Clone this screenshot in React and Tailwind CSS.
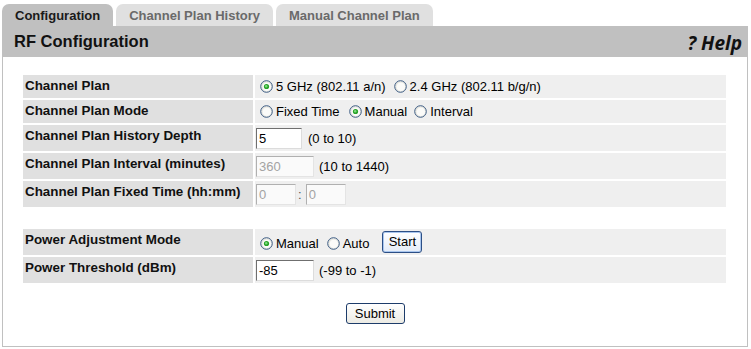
import React from 'react';

// XP style radio button
const Radio = ({ checked }) => (
  <svg width="13" height="13" viewBox="0 0 13 13" className="shrink-0">
    <circle cx="6.5" cy="6.5" r="5.8" fill="#e6e6e0" stroke="#3f5e86" strokeWidth="1" />
    <circle cx="6.8" cy="6.8" r="4.3" fill="#fbfbf9" />
    {checked && (
      <>
        <circle cx="6.5" cy="6.5" r="2.6" fill="#27a227" />
        <circle cx="6.2" cy="6.2" r="1.2" fill="#7bdc7b" />
      </>
    )}
  </svg>
);

const Option = ({ checked, label, className = '' }) => (
  <span className={`flex items-center gap-[3px] ${className}`}>
    <Radio checked={checked} />
    <span>{label}</span>
  </span>
);

const TextBox = ({ value, width, disabled }) => (
  <span
    className={`flex items-center h-[21px] pl-[2px] border ${
      disabled
        ? 'bg-[#fafafa] text-[#a3a3a3] border-t-[#b0b0b0] border-l-[#b0b0b0] border-r-[#e4e4e4] border-b-[#e4e4e4]'
        : 'bg-white text-black border-t-[#6f6f6f] border-l-[#6f6f6f] border-r-[#dcdcdc] border-b-[#dcdcdc]'
    }`}
    style={{ width }}
  >
    {value}
  </span>
);

const Label = ({ children }) => (
  <div className="bg-[#e0e0e0] pl-[2px] pt-[3px] font-bold text-[13.4px] leading-[15px] text-[#111]">{children}</div>
);

const Value = ({ children, className = '' }) => (
  <div className={`bg-[#efefef] pl-[1px] flex ${className}`}>{children}</div>
);

const tabs = [
  { name: 'Configuration', active: true },
  { name: 'Channel Plan History', active: false },
  { name: 'Manual Channel Plan', active: false }
];

export default function App() {
  return (
    <div className="w-[751px] h-[349px] bg-white pt-[4px] pl-[2px] text-[13px] leading-[15px] text-black font-['Liberation_Sans',Arial,sans-serif] overflow-hidden">
      {/* tabs */}
      <div className="flex gap-[3px] h-[22px]">
        {tabs.map(tab => (
          <div
            key={tab.name}
            className={`flex items-center pt-[1px] px-[13px] rounded-t-[7px] font-bold ${
              tab.active ? 'bg-[#c0c0c0] text-[#1a1a1a]' : 'bg-[#e0e0e0] text-[#6a6a6a]'
            }`}
          >
            {tab.name}
          </div>
        ))}
      </div>

      <div className="w-[746px]">
        {/* header bar */}
        <div className="h-[31px] bg-[#c0c0c0] flex items-center justify-between pl-[12px] pr-[6px]">
          <span className="font-bold text-[16.5px] text-[#111]">RF Configuration</span>
          <span className="font-['Noto_Sans',sans-serif] font-bold italic text-[19px] leading-[20px] text-[#111] pt-[2px]">? Help</span>
        </div>

        {/* body */}
        <div className="border-x border-b border-[#c0c0c0] pt-[18px] pl-[20px] pr-[20px] pb-[22px]">
          <div className="grid grid-cols-[230px_471px] gap-[2px]">
            <Label>Channel Plan</Label>
            <Value className="h-[23px] items-center">
              <Option checked label="5 GHz (802.11 a/n)" className="ml-[4px]" />
              <Option label="2.4 GHz (802.11 b/g/n)" className="ml-[8px]" />
            </Value>

            <Label>Channel Plan Mode</Label>
            <Value className="h-[23px] items-center">
              <Option label="Fixed Time" className="ml-[4px]" />
              <Option checked label="Manual" className="ml-[9px]" />
              <Option label="Interval" className="ml-[7px]" />
            </Value>

            <Label>Channel Plan History Depth</Label>
            <Value className="h-[26px] items-center">
              <div className="flex items-baseline">
                <TextBox value="5" width={46} />
                <span className="ml-[6px]">(0 to 10)</span>
              </div>
            </Value>

            <Label>Channel Plan Interval (minutes)</Label>
            <Value className="h-[26px] items-center">
              <div className="flex items-baseline">
                <TextBox value="360" width={58} disabled />
                <span className="ml-[5px]">(10 to 1440)</span>
              </div>
            </Value>

            <Label>Channel Plan Fixed Time (hh:mm)</Label>
            <Value className="h-[26px] items-center">
              <div className="flex items-baseline">
                <TextBox value="0" width={40} disabled />
                <span className="ml-[2px] mr-[4px] text-[#555]">:</span>
                <TextBox value="0" width={40} disabled />
              </div>
            </Value>
          </div>

          <div className="grid grid-cols-[230px_471px] gap-[2px] mt-[22px]">
            <Label>Power Adjustment Mode</Label>
            <Value className="h-[26px] items-end">
              <Option checked label="Manual" className="ml-[4px] mb-[4px]" />
              <Option label="Auto" className="ml-[8px] mb-[4px]" />
              <button className="ml-[13px] mb-[2px] h-[22px] w-[40px] rounded-[3px] border border-[#2c4f86] bg-gradient-to-b from-white to-[#e4ecf8] shadow-[inset_0_0_0_1px_#a9c6ee] text-[13px] leading-[15px] pb-[2px]">
                Start
              </button>
            </Value>

            <Label>Power Threshold (dBm)</Label>
            <Value className="h-[26px] items-center">
              <div className="flex items-baseline">
                <TextBox value="-85" width={58} />
                <span className="ml-[5px]">(-99 to -1)</span>
              </div>
            </Value>
          </div>

          <div className="flex justify-center mt-[20px]">
            <button className="h-[21px] w-[59px] rounded-[3px] border border-[#1d3c6a] bg-gradient-to-b from-white to-[#ecebe4] text-[13px] leading-[15px]">
              Submit
            </button>
          </div>
        </div>
      </div>
    </div>
  );
}
